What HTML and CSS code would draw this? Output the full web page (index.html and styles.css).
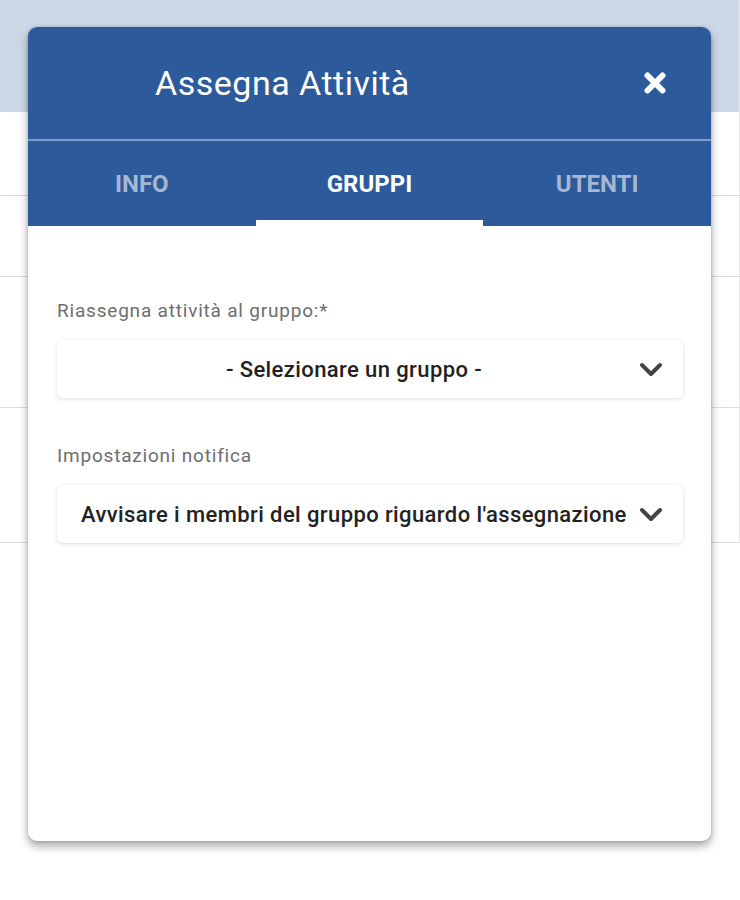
FILE: index.html
```html
<!DOCTYPE html>
<html lang="it">
<head>
<meta charset="utf-8">
<title>Assegna Attività</title>
<link rel="stylesheet" href="styles.css">
</head>
<body>
<div class="page">
  <div class="band"></div>
  <div class="row r1"></div>
  <div class="row r2"></div>
  <div class="row r3"></div>
  <div class="row r4"></div>
</div>

<div class="modal">
  <div class="modal-header">
    <h1 class="title">Assegna Attività</h1>
    <button class="close" aria-label="Chiudi">
      <svg viewBox="0 0 24 24" width="24" height="24"><path d="M4.5 4.5 L19.5 19.5 M19.5 4.5 L4.5 19.5" stroke="#fff" stroke-width="6" stroke-linecap="round"/></svg>
    </button>
  </div>
  <div class="tabs">
    <div class="tab">INFO</div>
    <div class="tab active">GRUPPI</div>
    <div class="tab">UTENTI</div>
  </div>
  <div class="modal-body">
    <div class="field">
      <label class="label">Riassegna attività al gruppo:*</label>
      <div class="select center">
        <span class="value">- Selezionare un gruppo -</span>
        <svg class="chev" viewBox="0 0 24 16" width="24" height="16"><path d="M3 3 L12 12 L21 3" fill="none" stroke="#444" stroke-width="4" stroke-linecap="round" stroke-linejoin="round"/></svg>
      </div>
    </div>
    <div class="field">
      <label class="label">Impostazioni notifica</label>
      <div class="select">
        <span class="value">Avvisare i membri del gruppo riguardo l'assegnazione</span>
        <svg class="chev" viewBox="0 0 24 16" width="24" height="16"><path d="M3 3 L12 12 L21 3" fill="none" stroke="#444" stroke-width="4" stroke-linecap="round" stroke-linejoin="round"/></svg>
      </div>
    </div>
  </div>
</div>
</body>
</html>
```

FILE: styles.css
```css
* { box-sizing: border-box; }
html, body { margin: 0; padding: 0; }
body {
  background: #ffffff;
  font-family: Roboto, "Liberation Sans", Arial, sans-serif;
  width: 740px;
  height: 900px;
  overflow: hidden;
}
.page {
  display: flex;
  flex-direction: column;
  border-right: 1px solid #e6e6e6;
  width: 740px;
}
.band { height: 112px; background: #cdd8e6; }
.row { border-bottom: 1px solid #dcdcdc; }
.r1 { height: 84px; }
.r2 { height: 81px; }
.r3 { height: 131px; }
.r4 { height: 135px; }

.modal {
  position: absolute;
  left: 28px;
  top: 27px;
  width: 683px;
  height: 814px;
  background: #ffffff;
  border-radius: 9px;
  overflow: hidden;
  box-shadow: 0 5px 10px rgba(0,0,0,0.35), 0 0 3px rgba(0,0,0,0.2);
}
.modal-header {
  height: 114px;
  background: #2c5a9b;
  display: flex;
  align-items: center;
  justify-content: space-between;
  padding: 0 44px 0 127px;
  border-bottom: 2px solid #7e9cc8;
}
.title {
  margin: 0;
  color: #ffffff;
  font-size: 34px;
  font-weight: 400;
  letter-spacing: 0.5px;
  padding-left: 0;
}
.close {
  border: 0;
  background: transparent;
  padding: 0;
  width: 24px;
  height: 24px;
  display: flex;
}
.tabs {
  display: grid;
  grid-template-columns: 1fr 1fr 1fr;
  background: #2c5a9b;
  height: 85px;
}
.tab {
  display: flex;
  align-items: center;
  justify-content: center;
  color: #a6b7d4;
  font-size: 24px;
  font-weight: 700;
  border-bottom: 6px solid transparent;
  padding-top: 6px;
}
.tab.active {
  color: #ffffff;
  border-bottom-color: #ffffff;
}
.modal-body {
  padding: 72px 28px 0 29px;
  display: flex;
  flex-direction: column;
  gap: 45px;
}
.field { display: flex; flex-direction: column; gap: 16px; }
.label {
  color: #6e6e6e;
  font-size: 19px;
  line-height: 26px;
  letter-spacing: 0.8px;
}
.select {
  height: 58px;
  border-radius: 6px;
  background: #fff;
  box-shadow: 0 1px 4px rgba(0,0,0,0.14);
  display: flex;
  align-items: center;
  padding: 0 20px 0 24px;
  gap: 12px;
}
.select .value {
  flex: 1;
  color: #222;
  font-size: 22px;
  font-weight: 500;
  letter-spacing: 0.4px;
  white-space: nowrap;
}
.select.center .value { text-align: center; }
.chev { flex: none; margin-top: 2px; }
```
